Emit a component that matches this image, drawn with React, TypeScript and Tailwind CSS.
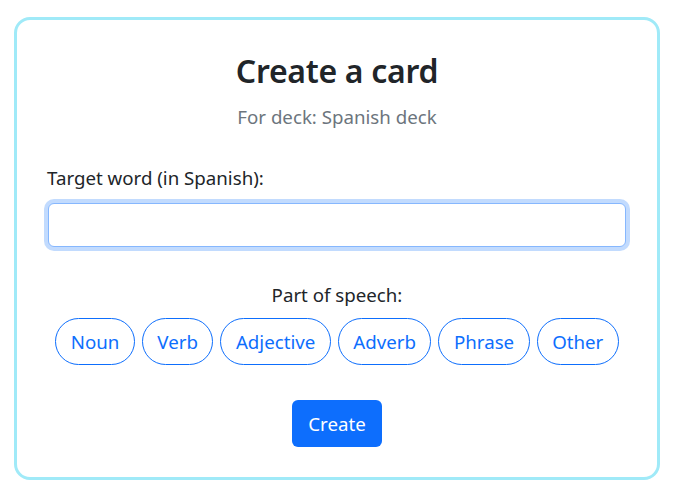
export default function App() {
  const pills = ["Noun", "Verb", "Adjective", "Adverb", "Phrase", "Other"];
  return (
    <div className="w-[676px] h-[498px] bg-white pt-[17px] pl-[14px]" style={{ fontFamily: '"Noto Sans", sans-serif' }}>
      <div className="w-[646px] h-[463px] border-[3px] border-[#a0eaf8] rounded-[16px] px-[30px] flex flex-col items-center">
        <h2 className="mt-[31px] text-[32px] leading-[40px] font-semibold text-[#212529] tracking-[-0.3px]">Create a card</h2>
        <p className="mt-[12px] text-[18.7px] leading-[28px] text-[#6c757d]">For deck: Spanish deck</p>
        <div className="self-stretch mt-[33px]">
          <label className="block text-[18.7px] leading-[28px] text-[#212529]">Target word (in Spanish):</label>
          <div className="mt-[11px] h-[44px] rounded-[6px] border border-[#86b7fe] shadow-[0_0_0_4px_rgba(13,110,253,0.25)] bg-white ml-[1px] mr-[1px]"></div>
        </div>
        <p className="mt-[34px] text-[18.7px] leading-[28px] text-[#212529]">Part of speech:</p>
        <div className="mt-[9px] flex gap-[7px]">
          {pills.map((p) => (
            <button key={p} className="h-[47px] px-[14.5px] rounded-full border border-[#0d6efd] text-[#0d6efd] text-[18.7px] leading-[28px] bg-white">
              {p}
            </button>
          ))}
        </div>
        <button className="mt-[35px] h-[47px] px-[16px] rounded-[6px] bg-[#0d6efd] text-white text-[18.7px] leading-[28px]">Create</button>
      </div>
    </div>
  );
}
